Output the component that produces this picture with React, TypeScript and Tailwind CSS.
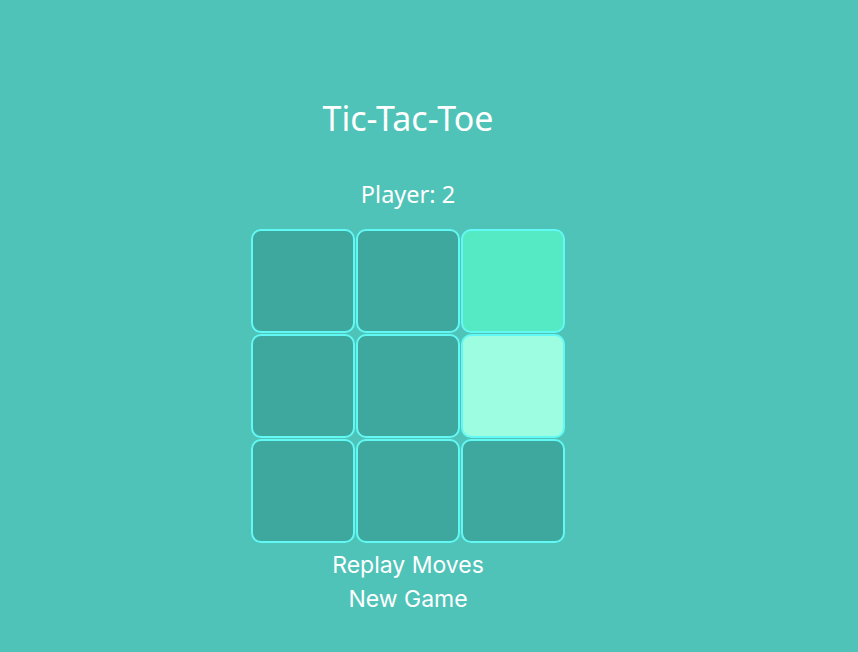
import React from 'react';

// board state: '' empty, 'a' filled, 'b' hovered / selected
const cells = ['', '', 'a', '', '', 'b', '', '', ''];

function Cell({ kind }: { kind: string }) {
  const bg =
    kind === 'a' ? 'bg-[#55eac4]' : kind === 'b' ? 'bg-[#9dfde0]' : 'bg-[#3ea89f]';
  return (
    <div
      className={`w-[104px] h-[104px] rounded-[10px] border-2 border-[#62f8f4] ${bg}`}
    />
  );
}

export default function App() {
  return (
    <div className="min-h-[652px] w-[858px] bg-[#4fc3b8] text-white">
      <div className="w-[816px] flex flex-col items-center pt-[97px]">
        <h1
          className="text-[34px] leading-[42px] font-normal"
          style={{ fontFamily: '"Noto Sans", Lato, sans-serif' }}
        >
          Tic-Tac-Toe
        </h1>
        <div
          className="mt-[41px] text-[23.5px] leading-[28px]"
          style={{ fontFamily: '"Noto Sans", Lato, sans-serif' }}
        >
          Player: 2
        </div>
        <div className="mt-[21px] grid grid-cols-3 gap-[1px]">
          {cells.map((c, i) => (
            <Cell key={i} kind={c} />
          ))}
        </div>
        <div
          className="mt-[7px] flex flex-col items-center"
          style={{ fontFamily: 'Inter, "Noto Sans", sans-serif' }}
        >
          <button className="text-[23px] leading-[30px]">Replay Moves</button>
          <button className="mt-[4px] text-[23px] leading-[30px]">New Game</button>
        </div>
      </div>
    </div>
  );
}
